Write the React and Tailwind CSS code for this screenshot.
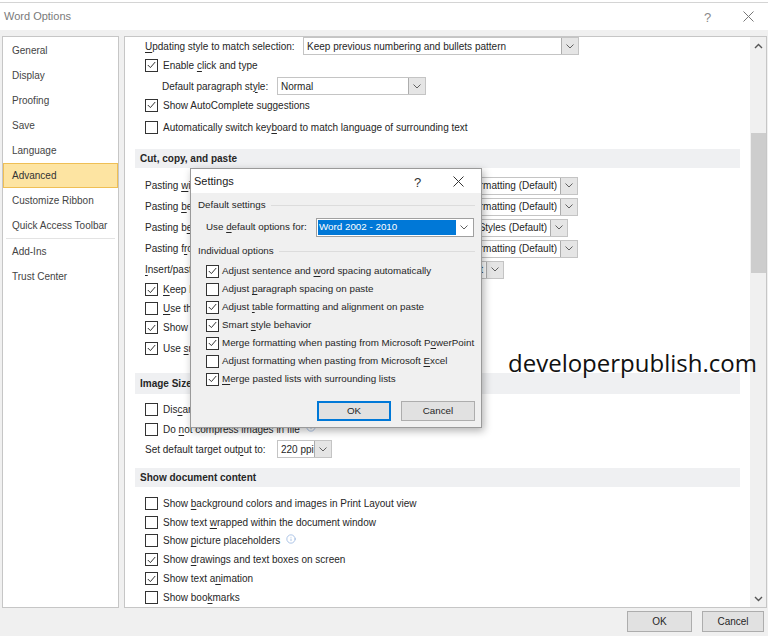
import React from 'react';
import { Info } from 'lucide-react';

// underline one access-key letter, like the Windows dialogs do
const L = ({ t, u }) => {
  if (u == null) return <span>{t}</span>;
  return (
    <span>
      {t.slice(0, u)}
      <span className="underline decoration-1 underline-offset-[2px]">{t[u]}</span>
      {t.slice(u + 1)}
    </span>
  );
};

const Chev = () => (
  <svg width="8" height="5" viewBox="0 0 8 5">
    <path d="M0.5 0.5 L4 4 L7.5 0.5" fill="none" stroke="#606060" strokeWidth="1" />
  </svg>
);

const Box = ({ checked }) => (
  <span className="w-[13px] h-[13px] shrink-0 border border-[#333] bg-white flex items-center justify-center">
    {checked && (
      <svg width="9" height="8" viewBox="0 0 9 8">
        <path d="M0.8 4 L3.4 6.6 L8.2 1" fill="none" stroke="#333" strokeWidth="1" />
      </svg>
    )}
  </span>
);

const Drop = ({ text, w, right }) => (
  <div className={`h-[18px] shrink-0 border border-[#c4c4c4] bg-white flex ${w}`}>
    <span className={`flex-1 min-w-0 flex items-center px-[3px] whitespace-nowrap overflow-hidden ${right ? 'justify-end' : ''}`}>
      {text}
    </span>
    <span className="w-[17px] border-l border-[#adadad] bg-[#e5e5e5] flex items-center justify-center">
      <Chev />
    </span>
  </div>
);

const CRow = ({ h, checked, t, u, info }) => (
  <div className={`${h} shrink-0 pl-[10px] flex items-center gap-[5px] whitespace-nowrap`}>
    <Box checked={checked} />
    <L t={t} u={u} />
    {info && <Info size={10} strokeWidth={1.5} className="text-[#7ea3d8] ml-[1px] -mt-[4px]" />}
  </div>
);

const Band = ({ h, children }) => (
  <div className={`${h} shrink-0 bg-[#eff0f2] pl-[5px] flex items-center font-bold`}>{children}</div>
);

const sideItems = ['General', 'Display', 'Proofing', 'Save', 'Language', 'Advanced', 'Customize Ribbon', 'Quick Access Toolbar'];

const dlgChecks = [
  [true, 'Adjust sentence and word spacing automatically', 20],
  [false, 'Adjust paragraph spacing on paste', 7],
  [true, 'Adjust table formatting and alignment on paste', 7],
  [true, 'Smart style behavior', 6],
  [true, 'Merge formatting when pasting from Microsoft PowerPoint', 46],
  [false, 'Adjust formatting when pasting from Microsoft Excel', 46],
  [true, 'Merge pasted lists with surrounding lists', 0],
];

const SettingsDialog = () => (
  <div className="absolute left-[190px] top-[168px] w-[292px] h-[260px] border border-[#9a9a9a] bg-[#f0f0f0] text-[9.8px] shadow-[2px_3px_8px_rgba(0,0,0,0.3)] flex flex-col">
    <div className="h-[24px] bg-white flex items-center pl-[3px] text-[11px] text-[#1a1a1a] relative">
      Settings
      <span className="absolute left-[223px] top-[4px] text-[13px] text-[#333]">?</span>
      <svg className="absolute left-[262px] top-[7px]" width="11" height="11" viewBox="0 0 11 11">
        <path d="M0.5 0.5 L10.5 10.5 M10.5 0.5 L0.5 10.5" stroke="#333" strokeWidth="1" />
      </svg>
    </div>
    <div className="pt-[4px] flex flex-col">
      <div className="h-[16px] pl-[7px] flex items-center">
        <span>Default settings</span>
        <span className="flex-1 h-px bg-[#dcdcdc] ml-[5px] mr-[6px]" />
      </div>
      <div className="mt-[5px] h-[19px] pl-[15px] flex items-center whitespace-nowrap">
        <span className="w-[110px] shrink-0"><L t="Use default options for:" u={4} /></span>
        <div className="w-[158px] h-[19px] shrink-0 border border-[#a0a0a0] bg-white flex p-[1px]">
          <span className="flex-1 bg-[#0078d7] text-white flex items-center pl-[1px]">Word 2002 - 2010</span>
          <span className="w-[16px] flex items-center justify-center"><Chev /></span>
        </div>
      </div>
      <div className="mt-[6px] h-[16px] pl-[7px] flex items-center">
        <span>Individual options</span>
        <span className="flex-1 h-px bg-[#dcdcdc] ml-[5px] mr-[6px]" />
      </div>
      <div className="mt-[3px] flex flex-col">
        {dlgChecks.map(([c, t, u]) => (
          <div key={t} className="h-[18px] pl-[15px] flex items-center gap-[3px] whitespace-nowrap">
            <Box checked={c} />
            <L t={t} u={u} />
          </div>
        ))}
      </div>
      <div className="mt-[13px] flex justify-end gap-[10px] pr-[6px]">
        <button className="w-[74px] h-[20px] border border-[#0078d7] bg-[#e1e1e1] shadow-[inset_0_0_0_1px_#0078d7]">OK</button>
        <button className="w-[74px] h-[20px] border border-[#adadad] bg-[#e1e1e1]">Cancel</button>
      </div>
    </div>
  </div>
);

export default function App() {
  return (
    <div className="w-[768px] h-[636px] relative overflow-hidden bg-[#f0f0f0] text-[10px] text-[#262626] font-['Liberation_Sans',Arial,sans-serif]">
      {/* title bar */}
      <div className="h-[30px] bg-white flex flex-col">
        <div className="h-[3px] border-b border-[#d4d4d4]" />
        <div className="flex-1 flex items-center pl-[4px] text-[11px] text-[#7a7a7a] relative">
          Word Options
          <span className="absolute left-[704px] top-[5px] text-[13px] text-[#8a8a8a]">?</span>
          <svg className="absolute left-[743px] top-[8px]" width="11" height="11" viewBox="0 0 11 11">
            <path d="M0.5 0.5 L10.5 10.5 M10.5 0.5 L0.5 10.5" stroke="#777" strokeWidth="1" />
          </svg>
        </div>
      </div>

      <div className="flex pt-[6px] pl-[2px] gap-[5px]">
        {/* sidebar */}
        <div className="w-[117px] h-[572px] border border-[#c6c6c6] bg-white pt-[1px] text-[#444] flex flex-col">
          {sideItems.map((s) =>
            s === 'Advanced' ? (
              <div key={s} className="h-[25px] border border-[#efbf55] bg-[#fde4a2] flex items-center pl-[8px] text-[#333]">{s}</div>
            ) : (
              <div key={s} className="h-[25px] flex items-center pl-[9px]">{s}</div>
            )
          )}
          <div className="h-px bg-[#e3e3e3] mx-[3px]" />
          <div className="h-[25px] flex items-center pl-[9px]">Add-Ins</div>
          <div className="h-[25px] flex items-center pl-[9px]">Trust Center</div>
        </div>

        {/* options panel */}
        <div className="w-[643px] h-[572px] border border-[#c6c6c6] bg-white flex overflow-hidden">
          <div className="flex-1 min-w-0 px-[10px] flex flex-col">
            <div className="h-[18px] shrink-0 pl-[10px] flex items-center whitespace-nowrap">
              <span className="w-[158px]"><L t="Updating style to match selection:" u={0} /></span>
              <Drop w="w-[276px]" text="Keep previous numbering and bullets pattern" />
            </div>
            <CRow h="h-[20px]" checked t="Enable click and type" u={7} />
            <div className="h-[22px] shrink-0 pl-[27px] flex items-center whitespace-nowrap">
              <span className="w-[115px]"><L t="Default paragraph style:" u={20} /></span>
              <Drop w="w-[149px]" text="Normal" />
            </div>
            <CRow h="h-[16px]" checked t="Show AutoComplete suggestions" />
            <CRow h="h-[28px]" t="Automatically switch keyboard to match language of surrounding text" u={24} />
            <div className="h-[8px] shrink-0" />
            <Band h="h-[19px]">Cut, copy, and paste</Band>
            <div className="h-[7px] shrink-0" />
            {[
              ['Pasting within the same document:', 8, 'w-[188px]', 'Keep Source Formatting (Default)'],
              ['Pasting between documents:', 8, 'w-[188px]', 'Keep Source Formatting (Default)'],
              ['Pasting between documents when style definitions conflict:', 9, 'w-[178px]', 'Use Destination Styles (Default)'],
              ['Pasting from other programs:', 9, 'w-[188px]', 'Keep Source Formatting (Default)'],
              ['Insert/paste pictures as:', 0, 'w-[114px]', 'In line with text'],
            ].map(([t, u, w, v]) => (
              <div key={t} className="h-[21px] shrink-0 pl-[10px] flex items-center whitespace-nowrap">
                <span className="w-[245px] overflow-hidden"><L t={t} u={u} /></span>
                <Drop w={w} text={v} right />
              </div>
            ))}
            <CRow h="h-[19px]" checked t="Keep bullets and numbers when pasting text with Keep Text Only option" u={0} />
            <CRow h="h-[19px]" t="Use the Insert key for paste" u={0} />
            <CRow h="h-[19px]" checked t="Show Paste Options button when content is pasted" u={9} />
            <CRow h="h-[22px]" checked t="Use smart cut and paste" u={4} />
            <div className="h-[14px] shrink-0" />
            <Band h="h-[21px]">Image Size and Quality</Band>
            <div className="h-[5px] shrink-0" />
            <CRow h="h-[20px]" t="Discard editing data" u={3} />
            <CRow h="h-[20px]" t="Do not compress images in file" u={3} info />
            <div className="h-[20px] shrink-0 pl-[10px] flex items-center whitespace-nowrap">
              <span className="w-[132px]"><L t="Set default target output to:" u={22} /></span>
              <Drop w="w-[55px]" text="220 ppi" />
            </div>
            <div className="h-[9px] shrink-0" />
            <Band h="h-[19px]">Show document content</Band>
            <div className="h-[7px] shrink-0" />
            <CRow h="h-[18.8px]" t="Show background colors and images in Print Layout view" u={5} />
            <CRow h="h-[18.8px]" t="Show text wrapped within the document window" u={10} />
            <CRow h="h-[18.8px]" t="Show picture placeholders" u={5} info />
            <CRow h="h-[18.8px]" checked t="Show drawings and text boxes on screen" u={5} />
            <CRow h="h-[18.8px]" checked t="Show text animation" u={11} />
            <CRow h="h-[18.8px]" t="Show bookmarks" u={8} />
          </div>

          {/* scrollbar */}
          <div className="w-[16px] shrink-0 bg-[#f0f0f0] flex flex-col items-center">
            <div className="h-[17px] shrink-0 flex items-center justify-center">
              <svg width="9" height="6" viewBox="0 0 9 6">
                <path d="M1 5 L4.5 1.5 L8 5" fill="none" stroke="#555" strokeWidth="1.4" />
              </svg>
            </div>
            <div className="h-[79px] shrink-0" />
            <div className="w-[15px] h-[140px] shrink-0 bg-[#cdcdcd]" />
            <div className="flex-1" />
            <div className="h-[17px] shrink-0 flex items-center justify-center">
              <svg width="9" height="6" viewBox="0 0 9 6">
                <path d="M1 1 L4.5 4.5 L8 1" fill="none" stroke="#555" strokeWidth="1.4" />
              </svg>
            </div>
          </div>
        </div>
      </div>

      {/* bottom buttons */}
      <div className="mt-[3px] flex justify-end gap-[10px] pr-[4px]">
        <button className="w-[65px] h-[21px] border border-[#adadad] bg-[#e1e1e1]">OK</button>
        <button className="w-[62px] h-[21px] border border-[#adadad] bg-[#e1e1e1]">Cancel</button>
      </div>

      <SettingsDialog />

      <div className="absolute left-[508px] top-[348px] leading-[30px] text-[24px] text-[#111] font-['Open_Sans',sans-serif]">
        developerpublish.com
      </div>
    </div>
  );
}
